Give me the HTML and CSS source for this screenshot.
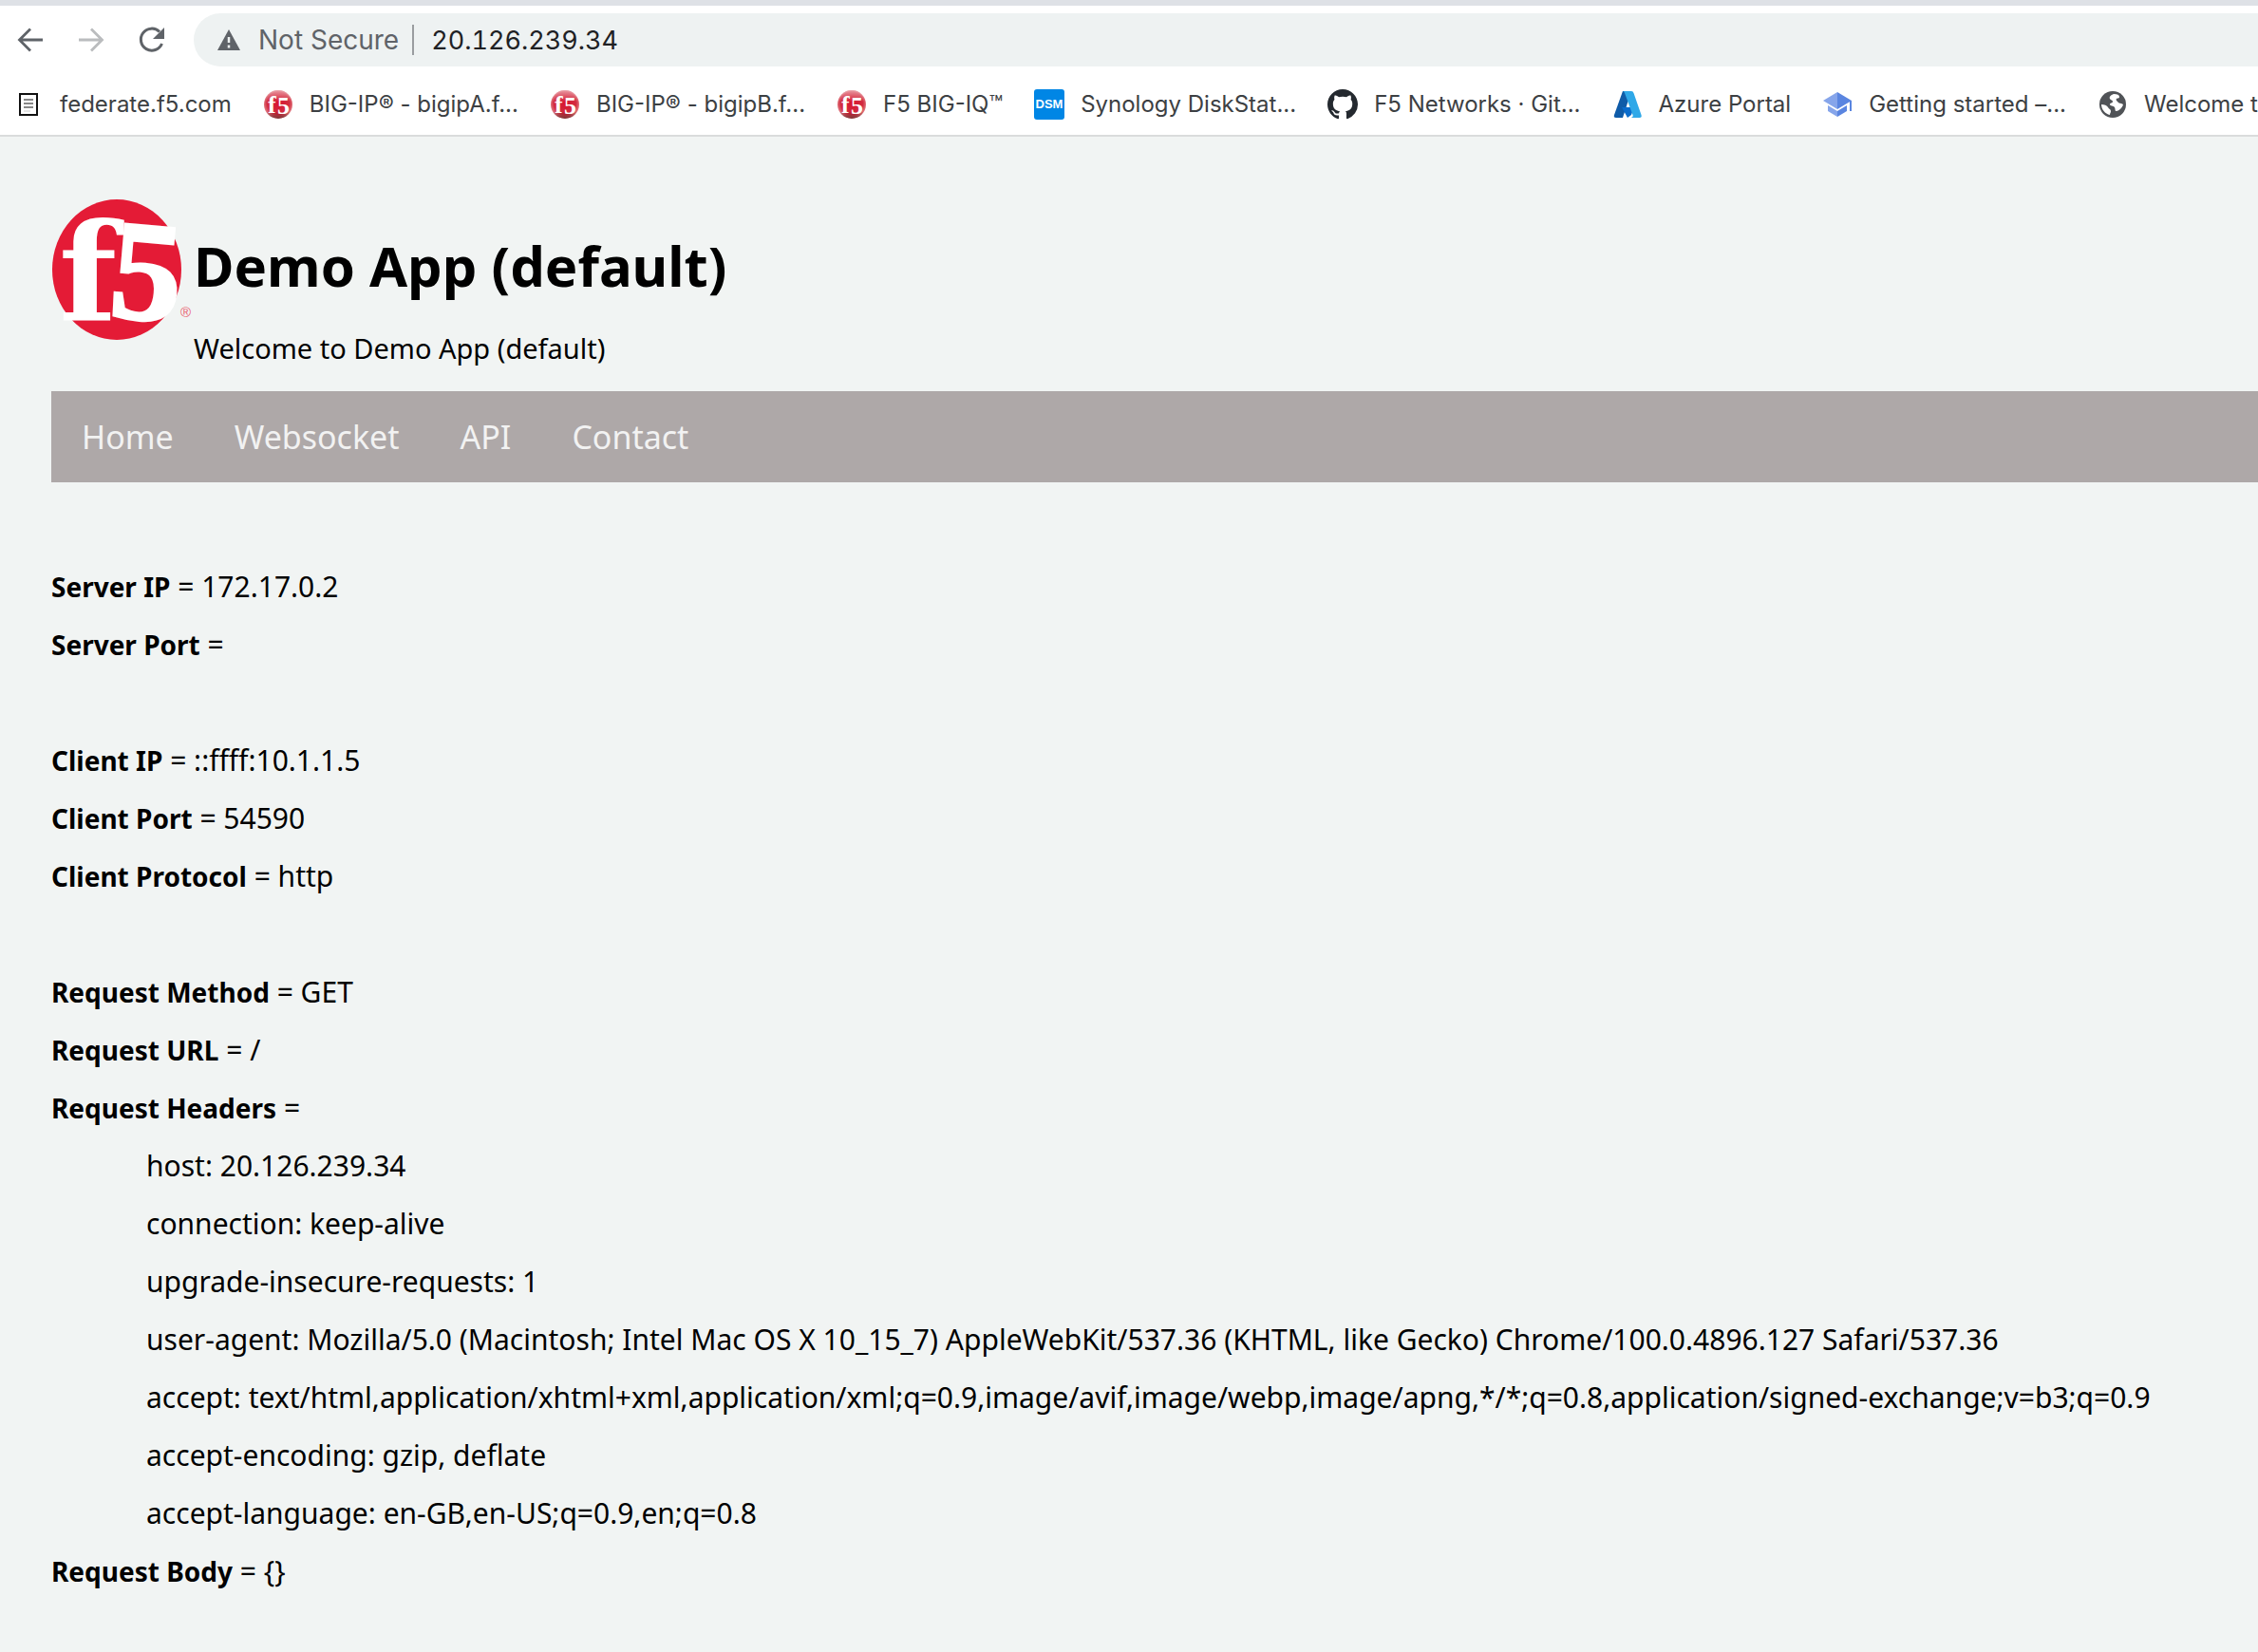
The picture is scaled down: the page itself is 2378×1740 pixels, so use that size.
FILE: index.html
```html
<!DOCTYPE html>
<html lang="en">
<head>
<meta charset="utf-8">
<title>Demo App (default)</title>
<link rel="stylesheet" href="styles.css">
</head>
<body>
<svg class="sprite" aria-hidden="true">
  <defs>
    <radialGradient id="ball" cx="50%" cy="45%" r="60%">
      <stop offset="0" stop-color="#d8152f"/><stop offset="0.65" stop-color="#d22c40"/><stop offset="1" stop-color="#e9a9a9"/>
    </radialGradient>
    <linearGradient id="shade" x1="0" y1="0" x2="0" y2="1">
      <stop offset="0" stop-color="#fff" stop-opacity="0.5"/><stop offset="0.4" stop-color="#fff" stop-opacity="0"/><stop offset="0.75" stop-color="#400" stop-opacity="0"/><stop offset="1" stop-color="#400" stop-opacity="0.65"/>
    </linearGradient>
    <symbol id="f5-ball" viewBox="0 0 32 32">
      <ellipse cx="16" cy="16" rx="15" ry="15" fill="url(#ball)"/>
      <ellipse cx="16" cy="16" rx="15" ry="15" fill="url(#shade)"/>
      <text class="ball-text" x="5" y="25">f</text>
      <text class="ball-text" x="15" y="26">5</text>
    </symbol>
  </defs>
</svg>

<header class="browser">
  <div class="toolbar">
    <button class="tool" aria-label="Back"><svg viewBox="0 0 32 32" width="32" height="32"><path d="M29 16H5M16 4.500L4.500 16 16 27.500" fill="none" stroke="#5f6368" stroke-width="2.800"/></svg></button>
    <button class="tool" aria-label="Forward" disabled><svg viewBox="0 0 32 32" width="32" height="32"><path d="M3 16h24M16 4.500L27.500 16 16 27.500" fill="none" stroke="#babcbe" stroke-width="2.800"/></svg></button>
    <button class="tool" aria-label="Reload"><svg viewBox="0 0 32 32" width="32" height="32"><path d="M26.500 20A11.500 11.500 0 1 1 24 7.500" fill="none" stroke="#5f6368" stroke-width="3"/><path d="M29 3v12H17z" fill="#5f6368"/></svg></button>
    <form class="address">
      <svg viewBox="0 0 26 24" width="26" height="24"><path d="M13 1L25 23H1z" fill="#5f6368"/><path d="M13 9v6M13 17.500v3" stroke="#eef2f2" stroke-width="2.500"/></svg>
      <label class="secure" for="url">Not Secure</label>
      <input class="url" id="url" type="text" value="20.126.239.34">
    </form>
  </div>
  <nav class="bookmarks" aria-label="Bookmarks">
    <a class="bookmark" href="#"><svg viewBox="0 0 32 32"><rect x="7" y="5" width="18" height="22" fill="#fff" stroke="#111" stroke-width="2"/><path d="M11 11h10M11 15h10M11 19h10" stroke="#888" stroke-width="2"/><path d="M11 23h7" stroke="#ccc" stroke-width="1"/></svg>federate.f5.com</a>
    <a class="bookmark" href="#"><svg><use href="#f5-ball"/></svg>BIG-IP® - bigipA.f...</a>
    <a class="bookmark" href="#"><svg><use href="#f5-ball"/></svg>BIG-IP® - bigipB.f...</a>
    <a class="bookmark" href="#"><svg><use href="#f5-ball"/></svg>F5 BIG-IQ™</a>
    <a class="bookmark" href="#"><svg viewBox="0 0 32 32"><rect width="32" height="32" rx="3" fill="#0086e5"/><text class="dsm" x="16" y="20">DSM</text></svg>Synology DiskStat...</a>
    <a class="bookmark" href="#"><svg viewBox="0 0 16 16"><path fill="#24292f" d="M8 0C3.580 0 0 3.580 0 8c0 3.540 2.290 6.530 5.470 7.590.4.070.55-.17.55-.38 0-.19-.01-.82-.01-1.490-2.010.37-2.530-.49-2.690-.94-.09-.23-.48-.94-.82-1.130-.28-.15-.68-.52-.01-.53.63-.01 1.080.58 1.230.82.72 1.210 1.870.87 2.330.66.07-.52.28-.87.51-1.070-1.780-.2-3.640-.89-3.640-3.950 0-.87.31-1.590.82-2.150-.08-.2-.36-1.020.08-2.120 0 0 .67-.21 2.200.82.64-.18 1.320-.27 2-.27s1.360.09 2 .27c1.530-1.040 2.200-.82 2.200-.82.44 1.100.16 1.920.08 2.120.51.56.82 1.270.82 2.150 0 3.070-1.870 3.750-3.650 3.950.29.25.54.73.54 1.480 0 1.070-.01 1.930-.01 2.200 0 .21.15.46.55.38A8.010 8.010 0 0 0 16 8c0-4.420-3.580-8-8-8z"/></svg>F5 Networks · Git...</a>
    <a class="bookmark" href="#"><svg viewBox="0 0 32 32"><path d="M11 2h9L11 30H4q-3 0-2-3z" fill="#0f5ba8"/><path d="M10 19h13l-3 8-4 3z" fill="#0a6ccc"/><path d="M11 2h9q2 0 2.500 2l8 23q1 3-2 3h-9q3-1 2-3L13 4q-.5-2-2-2z" fill="#2fa8e8"/></svg>Azure Portal</a>
    <a class="bookmark" href="#"><svg viewBox="0 0 32 32"><path d="M16 3L1 12l15 9z" fill="#86a5ea"/><path d="M16 3l15 9-15 9z" fill="#5a85e0"/><path d="M29 12h2v11h-2z" fill="#5a85e0"/><path d="M6 17l10 6v6L6 23z" fill="#86a5ea"/><path d="M26 17l-10 6v6l10-6z" fill="#5a85e0"/></svg>Getting started –...</a>
    <a class="bookmark" href="#"><svg viewBox="0 0 32 32"><circle cx="16" cy="16" r="14" fill="#505357"/><path d="M17 5c-3 1-5 3-4 5s3 1 3 3-3 1-3 3 4 1 5 3 0 4 2 4 6-3 7-7l-2-1c-2 0-3-1-4-2s-2-2-1-3 3 0 3-2-2-3-6-3zM4 16c3 0 6 1 7 3s3 2 3 4-1 2-1 4C8 26 4 21 4 16z" fill="#fff"/></svg>Welcome to</a>
  </nav>
</header>

<main class="page">
  <header class="masthead">
    <svg class="logo" viewBox="0 0 150 152" role="img" aria-label="f5">
      <ellipse cx="69" cy="76" rx="68" ry="74" fill="#e41b36"/>
      <text class="logo-f" x="8" y="129">f</text>
      <text class="logo-5" x="59" y="125" transform="rotate(5 59 125)">5</text>
      <text class="reg" x="136" y="126">®</text>
    </svg>
    <div class="titles">
      <h1 class="title">Demo App (default)</h1>
      <p class="welcome">Welcome to Demo App (default)</p>
    </div>
  </header>
  <nav class="menu">
    <a href="#">Home</a>
    <a href="#">Websocket</a>
    <a href="#">API</a>
    <a href="#">Contact</a>
  </nav>
  <div class="details">
    <section>
      <p><b>Server IP</b> = 172.17.0.2</p>
      <p><b>Server Port</b> =</p>
    </section>
    <section>
      <p><b>Client IP</b> = ::ffff:10.1.1.5</p>
      <p><b>Client Port</b> = 54590</p>
      <p><b>Client Protocol</b> = http</p>
    </section>
    <section>
      <p><b>Request Method</b> = GET</p>
      <p><b>Request URL</b> = /</p>
      <p><b>Request Headers</b> =</p>
      <ul class="headers">
        <li>host: 20.126.239.34</li>
        <li>connection: keep-alive</li>
        <li>upgrade-insecure-requests: 1</li>
        <li>user-agent: Mozilla/5.0 (Macintosh; Intel Mac OS X 10_15_7) AppleWebKit/537.36 (KHTML, like Gecko) Chrome/100.0.4896.127 Safari/537.36</li>
        <li>accept: text/html,application/xhtml+xml,application/xml;q=0.9,image/avif,image/webp,image/apng,*/*;q=0.8,application/signed-exchange;v=b3;q=0.9</li>
        <li>accept-encoding: gzip, deflate</li>
        <li>accept-language: en-GB,en-US;q=0.9,en;q=0.8</li>
      </ul>
      <p><b>Request Body</b> = {}</p>
    </section>
  </div>
</main>
</body>
</html>
```
FILE: styles.css
```css
* { box-sizing: border-box; margin: 0; padding: 0; }
body { background: #f1f4f3; color: #000; font-family: "Noto Sans", sans-serif; font-size: 30px; overflow-x: hidden; }
a { color: inherit; text-decoration: none; }
.sprite { display: block; width: 0; height: 0; }

.browser { background: #fff; border-top: 6px solid #dee1e6; border-bottom: 2px solid #dadcdc; font-family: Inter, sans-serif; }
.toolbar { display: flex; align-items: center; padding: 8px 0 0 16px; }
.tool { display: flex; width: 32px; height: 32px; margin-right: 32px; border: 0; background: none; }
.tool:nth-child(3) { margin-right: 28px; }
.address { flex: 1; display: flex; align-items: center; height: 56px; padding-left: 24px; border-radius: 28px 0 0 28px; background: #eef2f2; }
.secure { margin: 0 14px 0 18px; color: #5f6368; font-size: 28px; }
.url { flex: 1; height: 32px; padding-left: 18px; border: 0; border-left: 2px solid #9a9da0; background: none; color: #202124; font: 27px Inter, sans-serif; font-variant-numeric: tabular-nums; outline: 0; }

.bookmarks { display: flex; align-items: center; gap: 33px; height: 72px; padding: 8px 0 0 14px; overflow: hidden; }
.bookmark { display: flex; flex: none; align-items: center; gap: 17px; color: #3c4043; font-size: 24px; line-height: 32px; white-space: nowrap; }
.bookmark svg { width: 32px; height: 32px; }
.ball-text { fill: #fff; font: bold 26px "Liberation Serif", serif; }
.dsm { fill: #fff; font: bold 13px "Liberation Sans", sans-serif; text-anchor: middle; }

.page { padding: 64px 0 0 54px; }
.masthead { display: flex; height: 204px; }
.logo { width: 150px; height: 152px; flex: none; overflow: visible; }
.logo-f { fill: #fff; font: bold 142px "DejaVu Serif", serif; }
.logo-5 { fill: #fff; stroke: #fff; stroke-width: 3px; font: bold 150px "Liberation Serif", serif; }
.reg { fill: #e9606f; font: 15px "Liberation Sans", sans-serif; }
.titles { padding-top: 32px; }
.title { font-size: 58px; line-height: 80px; }
.welcome { margin-top: 27px; font-size: 29px; line-height: 40px; }

.menu { display: flex; background: #aea8a8; color: #f2f2f2; font-size: 34px; line-height: 96px; }
.menu a { padding: 0 32px; }

.details { display: grid; gap: 61px; padding: 79px 0 20px; line-height: 61px; }
.details b { font-size: 28px; line-height: 1; }
.headers { padding-left: 100px; list-style: none; }
```
